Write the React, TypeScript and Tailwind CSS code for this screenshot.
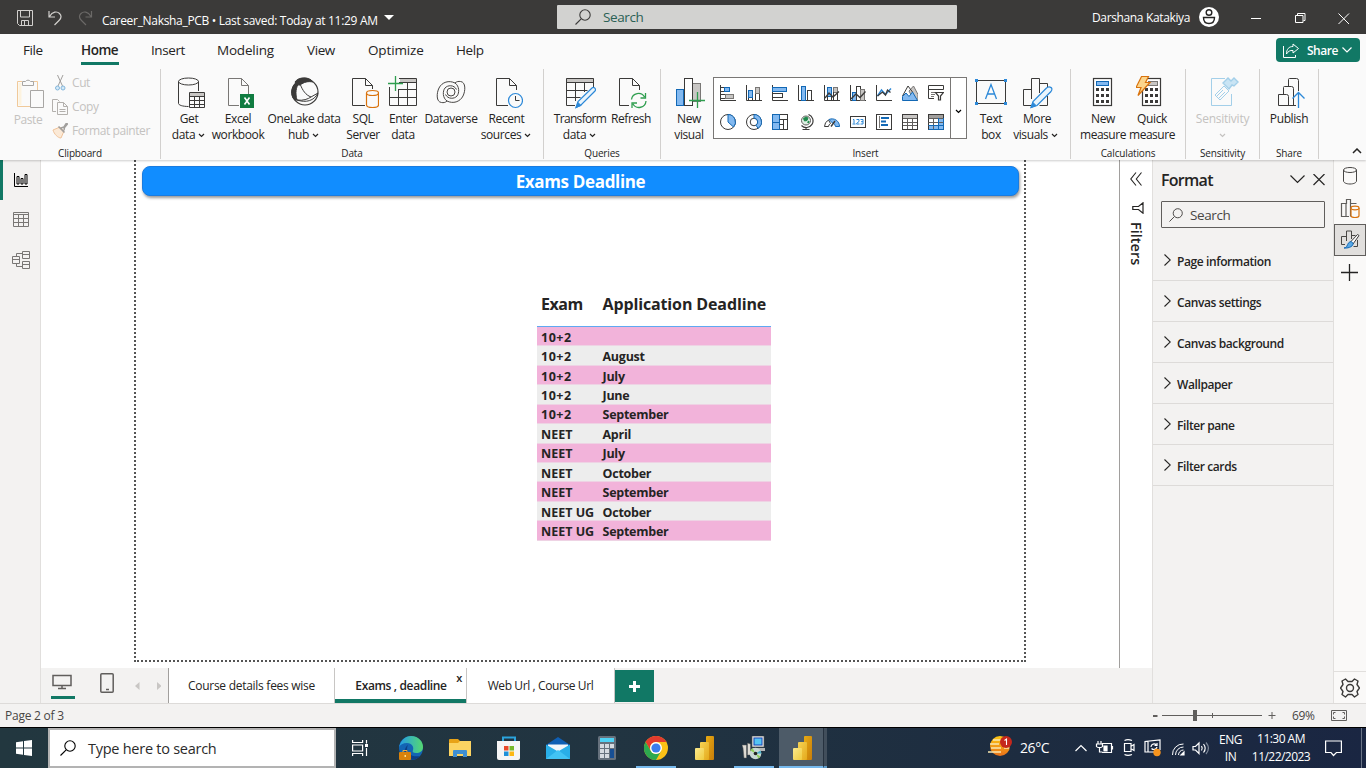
import React from 'react';

type Box = { b: string; className?: string; children: React.ReactNode };

/* Outline drawing; b is the view box "x y w h" and the class gives the size. */
function Ico({ b, className = '', children }: Box) {
  return (
    <svg viewBox={b} className={'block shrink-0 ' + className} fill="none" stroke="#3b3a39" strokeWidth="1">
      {children}
    </svg>
  );
}

const Caret = ({ className = '' }: { className?: string }) => (
  <svg viewBox="0 0 7 5" className={'inline-block h-[5px] w-[7px] ' + className} fill="none" stroke="currentColor" strokeWidth="1.2">
    <path d="M1 1l2.5 2.5L6 1" />
  </svg>
);

const Mag = ({ className = '' }: { className?: string }) => (
  <svg viewBox="0 0 16 16" className={'block shrink-0 ' + className} fill="none" stroke="currentColor" strokeWidth="1.1">
    <circle cx="10" cy="6" r="5.2" />
    <path d="M6.2 9.8L.5 15.5" />
  </svg>
);

type BtnProps = { w: string; l1: string; l2?: string; caret?: boolean; dim?: boolean; t?: string; t2?: string; children: React.ReactNode };
function Btn({ w, l1, l2, caret, dim, t = '', t2 = '', children }: BtnProps) {
  return (
    <div className={'flex flex-col items-center whitespace-nowrap pt-2 text-xs leading-4 ' + w + (dim ? ' text-[#c4c2c0]' : ' text-[#252423]')}>
      {children}
      <div className={'mt-[2px] ' + t}>{l1}</div>
      <div className={'flex h-4 items-center ' + t2}>
        {l2}
        {caret && <Caret className={l2 ? 'ml-[3px] mr-px mt-px' : ''} />}
      </div>
    </div>
  );
}

function Group({ w, label, left, children }: { w: string; label: string; left?: boolean; children: React.ReactNode }) {
  return (
    <div className={'flex h-[92px] flex-col ' + w}>
      <div className="flex h-[90px] flex-col border-r border-[#d2d0ce]">
        <div className={'flex h-[78px] ' + (left ? '' : 'justify-center')}>{children}</div>
        <div className="text-center text-[10px] leading-[12px] tracking-[-0.015em] text-[#252423]">{label}</div>
      </div>
    </div>
  );
}

const PBI = () => (
  <svg viewBox="0 0 20 24" className="h-6 w-5" stroke="none">
    <defs>
      <linearGradient id="pa" x1="0" y1="0" x2="1" y2="1"><stop stopColor="#e9ab12" /><stop offset="1" stopColor="#c77d0a" /></linearGradient>
      <linearGradient id="pb" x1="0" y1="0" x2="1" y2="1"><stop stopColor="#f6d355" /><stop offset="1" stopColor="#e4a91b" /></linearGradient>
      <linearGradient id="pc" x1="0" y1="0" x2="1" y2="1"><stop stopColor="#fbe98c" /><stop offset="1" stopColor="#f0cb3f" /></linearGradient>
    </defs>
    <rect x="11" y="0" width="8" height="24" rx="1" fill="url(#pa)" />
    <rect x="5" y="6" width="9" height="18" rx="1" fill="url(#pb)" />
    <rect x="0" y="12" width="9" height="12" rx="1" fill="url(#pc)" />
  </svg>
);

const gallery: React.ReactNode[] = [
  <><path d="M.5 0v15.500H16" /><rect x=".5" y="2.500" width="4" height="4" fill="#fff" /><rect x="4.500" y="2.500" width="5" height="4" fill="#83b9f0" stroke="#1268b5" /><rect x=".5" y="9.500" width="5" height="4" fill="#fff" /><rect x="5.500" y="9.500" width="8" height="4" fill="#c8c6c4" stroke="#797775" /></>,
  <><path d="M.5 0v15.500H16" /><path d="M2.500 12.500v3M6.500 12.500v3M2.500 12.500h4M9.500 8.500v7M13.500 8.500v7" /><rect x="2.500" y="5.500" width="4" height="7" fill="#83b9f0" stroke="#1268b5" /><rect x="9.500" y="2.500" width="4" height="6" fill="#c8c6c4" stroke="#797775" /></>,
  <><path d="M.5 0v15.500H16" /><rect x=".5" y="2.500" width="14" height="4" fill="#83b9f0" stroke="#1268b5" /><rect x=".5" y="8.500" width="10" height="4" fill="#fff" /></>,
  <><path d="M.5 0v15.500H16" /><rect x="3.500" y="1.500" width="4" height="14" fill="#83b9f0" stroke="#1268b5" /><rect x="9.500" y="5.500" width="4" height="10" fill="#fff" /></>,
  <><path d="M.5 0v15.500H16" /><rect x="3.500" y="2.500" width="4" height="9" fill="#83b9f0" stroke="#1268b5" /><rect x="9.500" y="2.500" width="4" height="5" fill="#c8c6c4" stroke="#797775" /><path d="M3.500 11v4M7.500 11v4M9.500 7v8M13.500 7v8" /><path d="M1 13l4-5 4 4 6-5.500" strokeWidth="1.300" /></>,
  <><path d="M.5 0v15.500H16" /><rect x="2.500" y="7.500" width="4" height="8" fill="#83b9f0" stroke="#1268b5" /><rect x="6.500" y="1.500" width="4" height="14" fill="#fff" /><rect x="10.500" y="4.500" width="4" height="11" fill="#c8c6c4" stroke="#797775" /><path d="M1 14l5-5 4 3.500 5.500-6" strokeWidth="1.300" /></>,
  <><path d="M.5 0v15.500H16" /><path d="M1.500 11l4-6 4 4.500L15 3.500" stroke="#2b88d8" strokeWidth="1.400" /><path d="M1.500 11l5-4 3 3 2-5 3 2.500" strokeWidth="1.300" /></>,
  <><path d="M7 6l4.500-5L16 9.500v6h-4z" fill="#c8c6c4" stroke="#797775" /><path d="M.5 11L6 1l4.500 6" /><path d="M.5 15.500v-4L4 8l3 3.500L10.500 7l5 8.500z" fill="#83b9f0" stroke="#1268b5" /></>,
  <><path d="M6 13.500H.5V.5h15v4M.5 4.500h15" /><path d="M3 7.500h4M3 9.500h4M3 11.500h3" stroke="#797775" /><path d="M7.500 7.500h8l-3 3.500v4h-2v-4z" fill="#fff" strokeWidth="1.200" /></>,
  <><circle cx="8" cy="8" r="7.500" /><path d="M8 8V.5A7.500 7.500 0 0 1 13.500 13z" fill="#83b9f0" stroke="#1268b5" /></>,
  <><circle cx="8" cy="8" r="7.500" /><circle cx="8" cy="8" r="3.800" /><path d="M8 .5A7.500 7.500 0 0 1 12 14.300L10 11.200A3.800 3.800 0 0 0 8 4.200z" fill="#83b9f0" stroke="#1268b5" /></>,
  <><rect x=".5" y=".5" width="15" height="15" fill="#fff" /><path d="M.5.500h7v15h-7zM.5 8.500h7" fill="#83b9f0" stroke="#1268b5" /><path d="M7.500 5.500h8M7.500 10.500h4M11.500 5.500v10" /></>,
  <><circle cx="8" cy="6.500" r="4.500" fill="#dff0e4" stroke="#605e5c" /><path d="M5.500 4.500l2.500-1.500 2 1-1 2.500-2.500.5zM9.500 8l1.500-1-.5 2z" fill="#1f8a4c" stroke="#1f8a4c" /><path d="M10.500.5A6.700 6.700 0 1 1 3.500 11.500M8 13.500v2M4.500 15.500h7" strokeWidth="1.200" /></>,
  <><path d="M.5 12.500a7.500 7.500 0 0 1 4-6.500l2 3.500a4 4 0 0 0-2 3z" fill="#fff" /><path d="M5 5.500a7.500 7.500 0 0 1 10.500 7h-4a4 4 0 0 0-3-3.500z" fill="#83b9f0" stroke="#1268b5" /><path d="M7 12.500L11 7" strokeWidth="1.400" /></>,
  <><rect x=".5" y="2.500" width="15" height="11" fill="#fff" /><path d="M3 5.500h1v4M2.500 10h3M6.500 5.500h2.500v2l-2.500 2v.5H9.500M10.500 5.500h2.500v4.500h-2.500M11 7.700h2" stroke="#2b88d8" /></>,
  <><rect x=".5" y=".5" width="15" height="15" fill="#fff" /><path d="M3.500 2v12" stroke="#797775" /><path d="M5 4h8M5 7.500h5M5 11h7" stroke="#1268b5" strokeWidth="2" /></>,
  <><rect x=".5" y=".5" width="15" height="15" fill="#fff" /><path d="M1 2.500h14" stroke="#c8c6c4" strokeWidth="3" /><path d="M.5 4.500h15M.5 8.500h15M.5 11.500h15M5.500 4v11M10.500 4v11" stroke="#605e5c" /><path d="M.5.500h15v15H.5z" /></>,
  <><rect x=".5" y=".5" width="15" height="15" fill="#fff" /><path d="M1 2.500h14" stroke="#a19f9d" strokeWidth="3" /><rect x="10.500" y="4" width="5" height="11.500" fill="#83b9f0" stroke="none" /><rect x="1" y="12" width="14" height="3.500" fill="#83b9f0" stroke="none" /><path d="M.5.500h15v15H.5z" /><path d="M.5 4.500h15M.5 8.500h15M.5 11.500h15M5.500 4v11M10.500 4v11" stroke="#605e5c" /><path d="M10.500 4v11M15.500 4v11.500M.5 15.500h15M.5 11.500h15" stroke="#1268b5" /></>,
];

const rows: [string, string][] = [
  ['10+2', ''], ['10+2', 'August'], ['10+2', 'July'], ['10+2', 'June'], ['10+2', 'September'],
  ['NEET', 'April'], ['NEET', 'July'], ['NEET', 'October'], ['NEET', 'September'], ['NEET UG', 'October'], ['NEET UG', 'September'],
];

const sections = ['Page information', 'Canvas settings', 'Canvas background', 'Wallpaper', 'Filter pane', 'Filter cards'];

function TitleBar() {
  return (
    <div className="flex h-[34px] items-center bg-[#3b3a39] text-xs text-white">
      <Ico b="17 9 16 16" className="ml-[17px] mt-[2px] h-4 w-4">
        <g stroke="#d2d0ce"><path d="M17.500 9.500h15v15h-13l-2-2zM20.500 10v6h9v-6M21.500 24v-4.500h7V24M24.500 20v4" /></g>
      </Ico>
      <Ico b="48 9 15 16" className="ml-[15px] mt-px h-4 w-[15px]">
        <path d="M49 10v6h6M49.500 15.500c3-5 7.500-5.500 10-3s1.500 5-.5 7L54.500 24" stroke="#d2d0ce" strokeWidth="1.200" />
      </Ico>
      <Ico b="78 9 15 16" className="ml-[15px] mt-px h-4 w-[15px]">
        <path d="M91.500 10v6h-6M91 15.500c-3-5-7.500-5.500-10-3s-1.500 5 .5 7L86 24" stroke="#6b6967" strokeWidth="1.200" />
      </Ico>
      <div className="ml-[9px] mt-[7px] w-[282px] whitespace-nowrap tracking-[-0.026em]">Career_Naksha_PCB • Last saved: Today at 11:29 AM</div>
      <svg viewBox="0 0 10 5" className="mt-px h-[5px] w-[10px]"><path d="M0 0h10L5 5z" fill="#fff" /></svg>
      <div className="ml-[163px] flex h-6 w-[400px] items-center rounded-[1px] bg-[#d2d2d0] text-sm text-[#2b6155]">
        <Mag className="ml-[18px] h-4 w-4 text-[#3b3a39]" />
        <span className="ml-3 mt-px text-[13.500px]">Search</span>
      </div>
      <div className="ml-[135px] mt-[2px] w-[107px] whitespace-nowrap tracking-[-0.03em]">Darshana Katakiya</div>
      <svg viewBox="0 0 20 20" className="h-5 w-5"><circle cx="10" cy="10" r="10" fill="#fff" /><g fill="none" stroke="#252423" strokeWidth="1.400"><circle cx="10" cy="5.500" r="2.800" /><path d="M4.500 10.500h11c0 4-2 6-5.500 6s-5.500-2-5.500-6z" /></g></svg>
      <svg viewBox="1251 9 100 16" className="ml-8 mt-px h-4 w-[100px]" fill="none" stroke="#fff">
        <path d="M1251 17.500h10M1295.500 14.500h7.500v7h-7.500zM1297.500 14v-1.500h7.500v7h-1.500M1338.500 12.500l10.500 10.500M1349 12.500l-10.500 10.500" />
      </svg>
    </div>
  );
}

function Menu() {
  return (
    <div className="flex h-[34px] items-center whitespace-nowrap pb-[2px] pl-[23px] text-[13.500px] text-[#252423]">
      <span className="w-[58px]">File</span>
      <div className="flex w-[70px] self-stretch">
        <div className="flex h-[31px] w-[38px] items-center border-b-[3px] border-[#117865] pt-[4px] font-semibold tracking-[-0.035em]">Home</div>
      </div>
      <span className="w-[66px]">Insert</span>
      <span className="w-[90px] tracking-[-0.015em]">Modeling</span>
      <span className="w-[61px]">View</span>
      <span className="w-[88px] tracking-[-0.01em]">Optimize</span>
      <span className="w-[820px]">Help</span>
      <div className="flex h-6 w-[84px] items-center rounded bg-[#117865] text-xs text-white">
        <svg viewBox="0 0 17 15" className="ml-[7px] h-[15px] w-[17px]" fill="none" stroke="#fff"><path d="M.5 3v11.500h12V12M10 1l5.500 4.500L10 10V7.500C7 7 5 8.500 3.500 11c0-5 2.500-7.500 6.500-7.500z" /></svg>
        <span className="ml-[7px] mt-px font-semibold tracking-[-0.04em]">Share</span>
        <svg viewBox="0 0 10 6" className="ml-1 h-[6px] w-[10px]" fill="none" stroke="#fff" strokeWidth="1.200"><path d="M.5.500L5 5 9.500.500" /></svg>
      </div>
    </div>
  );
}

function Ribbon() {
  return (
    <div className="flex h-[92px] pt-[1px]">
      <Group w="w-[161px]" label="Clipboard" left>
        <Btn w="w-[56px]" l1="Paste" dim t="-mt-[1px]">
          <Ico b="13 75 32 34" className="-mt-px ml-[2px] h-[34px] w-8">
            <path d="M22 80.500h-4.500v25H30M33 80.500h4.500V89" stroke="#f0c99a" /><rect x="18.500" y="82" width="3" height="22" fill="#fdf3df" stroke="none" />
            <path d="M22.500 84.500v-4h3a3 3 0 0 1 5 0h3v4zM30.500 89.500h13v17h-13z" fill="#fafafa" stroke="#a8a6a4" />
          </Ico>
        </Btn>
        <div className="-ml-1 flex w-[105px] flex-col pt-[2px] text-xs leading-4 text-[#c4c2c0]">
          <div className="flex h-6 items-center"><Ico b="52 75 16 16" className="h-4 w-4"><path d="M57.500 75l5 11M63 75l-5 11" stroke="#a19f9d" /><g stroke="#83b7dc" fill="#d5e9f7"><circle cx="57.500" cy="88" r="2" /><circle cx="63" cy="88" r="2" /></g></Ico><span className="ml-1">Cut</span></div>
          <div className="flex h-6 items-center"><Ico b="52 98 16 16" className="h-4 w-4"><path d="M56 110.500h-3.500v-12h5l2 2M57.500 101.500h6l4 4v8h-10zM63.500 101.500v4h4M59.500 108.500h6M59.500 110.500h6" stroke="#b3b0ad" /></Ico><span className="ml-1">Copy</span></div>
          <div className="flex h-6 items-center"><Ico b="52 122 16 16" className="h-4 w-4"><path d="M53 129l7-3 4 4-3 7c-3 0-7-4-8-8z" stroke="#f0c39a" fill="#fbe9d6" /><path d="M58.500 125.500l6 6M61 127l3-1 2.500-4 1 1-3 3.500-.5 3" stroke="#a19f9d" strokeWidth="1.500" /></Ico><span className="ml-1 whitespace-nowrap tracking-[-0.035em]">Format painter</span></div>
        </div>
      </Group>
      <Group w="w-[383px]" label="Data">
        <Btn w="w-[42px] -ml-[3px]" l1="Get" l2="data" caret>
          <Ico b="173 76 32 32" className="h-8 w-8">
            <ellipse cx="188.500" cy="80.500" rx="10" ry="3.500" /><path d="M178.500 80.500v22c0 1.500 4 3 10 3M198.500 80.500V90" />
            <path d="M189.500 91.500h15v15h-15z" fill="#fafafa" /><path d="M190 93.500h14" stroke="#c8c6c4" strokeWidth="3" /><path d="M189.500 95.500h15M189.500 99.500h15M189.500 103.500h15M194.500 95.500v11M199.500 95.500v11" />
          </Ico>
        </Btn>
        <Btn w="w-[56px]" l1="Excel" l2="workbook">
          <Ico b="222 76 32 32" className="h-8 w-8">
            <path d="M239 104.500h-10.500v-27h13l7 7V93M241.500 77.500v7h7" stroke="#797775" />
            <rect x="240" y="93" width="14" height="14" fill="#107c41" stroke="none" /><path d="M244.500 96.500l5 7M249.500 96.500l-5 7" stroke="#fff" strokeWidth="1.600" />
          </Ico>
        </Btn>
        <Btn w="w-[76px]" l1="OneLake data" l2="hub" caret t="tracking-[-0.03em]">
          <Ico b="288 76 32 32" className="h-8 w-8">
            <circle cx="305" cy="91" r="13" strokeWidth="1.200" /><path d="M293 97c-3-6-1-13 5-16l1 1c-3 4-4 10-2 17-1.500.5-3-.5-4-2zM295 81c3-5 14-6 18 0-5-1-9 0-13 3-2 .5-4-1-5-3z" fill="#3b3a39" />
            <path d="M300.500 84c2 5 5 10 10.500 12M311 96l7-4M318 92c-4 8-12 10-21 7M297 99c6 1 11-1 14-3" />
          </Ico>
        </Btn>
        <Btn w="w-[42px]" l1="SQL" l2="Server">
          <Ico b="347 76 32 32" className="h-8 w-8">
            <path d="M365 104.500h-12.500v-27h13l7 7V88M365.500 77.500v7h7" />
            <g stroke="#d9720c" strokeWidth="1.200" fill="#fafafa"><path d="M366.500 92v12c0 1.500 2.500 2.500 6 2.500s6-1 6-2.500V92" /><ellipse cx="372.500" cy="92" rx="6" ry="2.500" /></g>
          </Ico>
        </Btn>
        <Btn w="w-[38px]" l1="Enter" l2="data">
          <Ico b="387 74 32 34" className="-mt-[2px] h-[34px] w-8">
            <rect x="400" y="77" width="16" height="4" fill="#c8c6c4" stroke="none" />
            <path d="M399 77.500h17.500v27h-27V86M399 81.500h17M398 88.500h18.500M389.500 96.500h27M398.500 88v16M407.500 81v23" /><path d="M395.500 75v15M388 82.500h15" stroke="#2f9e4f" strokeWidth="1.300" />
          </Ico>
        </Btn>
        <Btn w="w-[58px]" l1="Dataverse" t="tracking-[-0.03em]">
          <Ico b="435 76 32 32" className="h-8 w-8">
            <g stroke="#484644"><circle cx="451" cy="91" r="4" />
              <path d="M447 100C445 101.800 443.500 101.800 441.500 101.500C436 101 436.500 92 439 87C442 81 449 79 455 82C457 80.300 458.500 80.300 460.500 80.500C466 81 465.500 90 463 95C460 101 453 103 447 100z" />
              <path d="M447 100C442.500 97 442.500 90 445 87C447.500 84 454 83.500 456.500 88.500M455 82C459.500 85 459.500 92 457 95C454.500 98 448 98.500 445.500 93.500" />
            </g>
          </Ico>
        </Btn>
        <Btn w="w-[53px]" l1="Recent" l2="sources" caret>
          <Ico b="491 76 32 32" className="h-8 w-8">
            <path d="M508 104.500h-11.500v-27h13l7 7V89M509.500 77.500v7h7" />
            <circle cx="515.500" cy="99.500" r="7" stroke="#2b88d8" strokeWidth="1.200" fill="#fafafa" /><path d="M515.500 95v4.500h4" />
          </Ico>
        </Btn>
      </Group>
      <Group w="w-[117px]" label="Queries">
        <Btn w="w-[58px]" l1="Transform" l2="data" caret t="tracking-[-0.055em]">
          <Ico b="565 76 32 32" className="h-8 w-8">
            <rect x="567" y="77" width="28" height="4" fill="#c8c6c4" stroke="none" />
            <path d="M576 104.500h-8.500v-27h27V86M567.500 81.500h27M567.500 89.500h21M567.500 96.500h14M576.500 82v18M585.500 82v9" />
            <path d="M577 106.500l2-6L593 87c2-1.500 4.500 1 3 3l-14 14z" fill="#e9f4fc" stroke="#2b88d8" strokeWidth="1.200" /><path d="M577 106.500l2-5 3 3z" fill="#2b88d8" stroke="#2b88d8" />
          </Ico>
        </Btn>
        <Btn w="w-[44px]" l1="Refresh">
          <Ico b="615 76 32 32" className="h-8 w-8">
            <path d="M629 104.500h-9.500v-27h13l7 7V89M632.500 77.500v7h7" />
            <path d="M631.500 98.500a7 7 0 0 1 13-2.500M645.500 92v5h-5M646 100a7 7 0 0 1-13 3M632 107v-5h5" stroke="#2f9e4f" strokeWidth="1.300" />
          </Ico>
        </Btn>
      </Group>
      <Group w="w-[410px]" label="Insert">
        <Btn w="w-[42px] -ml-[2px]" l1="New" l2="visual">
          <Ico b="673 76 32 32" className="h-8 w-8">
            <rect x="676.500" y="88.500" width="7" height="16" fill="#83b9f0" stroke="#1268b5" /><rect x="692.500" y="82.500" width="8" height="18" fill="#c8c6c4" stroke="#797775" /><rect x="684.500" y="77.500" width="8" height="27" fill="#fff" />
            <path d="M697.500 91v16M689 99.500h16" stroke="#2f9e4f" strokeWidth="1.300" />
          </Ico>
        </Btn>
        <div className="ml-[3px] mt-2 flex h-[62px] w-[254px] border border-[#797775] bg-white">
          <div className="grid w-[237px] shrink-0 grid-cols-[repeat(9,26px)] content-start gap-y-[13px] border-r border-[#797775] pl-[6px] pt-[7px]">
            {gallery.map((g, i) => (
              <svg key={i} viewBox="0 0 16 16" className="h-4 w-4" fill="none" stroke="#3b3a39">{g}</svg>
            ))}
          </div>
          <div className="flex flex-1 items-center justify-center pt-[6px]"><Caret /></div>
        </div>
        <Btn w="w-[48px]" l1="Text" l2="box">
          <Ico b="975 76 32 32" className="h-8 w-8">
            <path d="M976.500 79.500h29v23h-29z" /><path d="M985.500 98l5.500-14.500 5.500 14.500M987.500 93h7" stroke="#2b88d8" strokeWidth="1.300" />
            <path d="M975 78h3v3h-3zM1004 78h3v3h-3zM975 101h3v3h-3zM1004 101h3v3h-3z" fill="#2b88d8" stroke="none" />
          </Ico>
        </Btn>
        <Btn w="w-[46px] -ml-px mr-px" l1="More" l2="visuals" caret t2="-ml-[2px]">
          <Ico b="1021 76 32 32" className="h-8 w-8">
            <path d="M1031 104.500h-7.500v-16h8M1031.500 98V77.500h8V92M1039.500 82.500h8V88M1047.500 95v9.500h-8" />
            <path d="M1031 106.500l2-6L1046 87.500c3-3 8-1 5 3L1037 104.500z" fill="#e9f4fc" stroke="#2b88d8" strokeWidth="1.200" /><path d="M1031 106.500l2-5 3 3z" fill="#2b88d8" stroke="#2b88d8" />
          </Ico>
        </Btn>
      </Group>
      <Group w="w-[115px]" label="Calculations">
        <Btn w="w-[49px] -ml-px" l1="New" l2="measure" t2="tracking-[-0.04em]">
          <Ico b="1087 76 32 32" className="h-8 w-8">
            <rect x="1093.500" y="77.500" width="18" height="27" strokeWidth="1.200" fill="#fff" /><rect x="1096.500" y="80.500" width="12" height="4" fill="#83b9f0" stroke="#1268b5" />
            <path d="M1096 88.500h14M1096 94.500h14M1096 100.500h14" strokeWidth="3" strokeDasharray="3 2" />
          </Ico>
        </Btn>
        <Btn w="w-[49px]" l1="Quick" l2="measure" t2="tracking-[-0.04em]">
          <Ico b="1136 74 32 34" className="-mt-[2px] h-[34px] w-8">
            <rect x="1142.500" y="77.500" width="18" height="27" strokeWidth="1.200" fill="#fff" /><rect x="1148.500" y="80.500" width="9" height="4" fill="#c8c6c4" stroke="#797775" />
            <path d="M1145 88.500h14M1145 94.500h14M1145 100.500h14" strokeWidth="3" strokeDasharray="3 2" />
            <path d="M1141.500 75.500h7l-3 6h4.500l-12 13 3-8h-5z" fill="#fbd58c" stroke="#d9720c" strokeWidth="1.200" />
          </Ico>
        </Btn>
      </Group>
      <Group w="w-[74px]" label="Sensitivity">
        <Btn w="w-[60px]" l1="Sensitivity" caret dim t="tracking-[-0.02em]">
          <Ico b="1207 76 32 32" className="h-8 w-8">
            <g stroke="#a3cfe9"><path d="M1225 77.500h-13.500v27h20V93" /><path d="M1215 94l9-9 5 5-9 9z" fill="#fafafa" /><path d="M1217 95l6-6M1219 97l6-6" /><path d="M1223 82l5-5 3 3 3-3 4 4-4 4-2-1-3 4z" fill="#c9e4f4" strokeWidth="1.400" /></g>
          </Ico>
        </Btn>
      </Group>
      <Group w="w-[59px]" label="Share">
        <Btn w="w-[44px]" l1="Publish">
          <Ico b="1273 76 32 32" className="h-8 w-8">
            <path d="M1278.500 93.500h8a2 2 0 0 1 2 2v9h-10zM1283.500 93v-6.500a1 1 0 0 1 1-1h7a2 2 0 0 1 2 2v16.500M1288.500 85v-6.500a1 1 0 0 1 1-1h7a2 2 0 0 1 2 2V90M1288 104.500h8" />
            <path d="M1298.500 107V91.500M1292.500 97.500l6-6 6 6" stroke="#2b88d8" strokeWidth="1.300" />
          </Ico>
        </Btn>
      </Group>
      <svg viewBox="0 0 10 6" className="ml-[33px] mt-[79px] h-[6px] w-[10px]" fill="none" stroke="#252423" strokeWidth="1.500"><path d="M1 5l4-4 4 4" /></svg>
    </div>
  );
}

function Canvas() {
  return (
    <div className="flex h-[508px] bg-white">
      <div className="ml-[93px] flex h-[502px] w-[892px] flex-col border-2 border-t-0 border-dotted border-[#555] px-[6px] pt-[6px]">
        <div className="h-[30px] w-[877px] rounded-lg border border-[#1a7ce0] bg-[#118dff] text-center text-[17px] font-bold leading-[29px] tracking-[-0.02em] text-white shadow-[1px_2px_3px_rgba(0,0,0,0.4)]">Exams Deadline</div>
        <div className="ml-[395px] mt-[89px] w-[234px] text-[#252423]">
          <div className="flex h-[42px] border-b border-[#5fa9f2] pl-1 text-[16px] font-bold leading-[38px] tracking-[-0.03em]">
            <div className="w-[61.500px]">Exam</div>
            <div className="whitespace-nowrap tracking-[-0.008em]">Application Deadline</div>
          </div>
          {rows.map(([a, b], i) => (
            <div key={i} className={'flex h-[19.430px] items-center border-b border-[#eed3e4] pl-1 pt-[3px] text-[12.500px] font-bold leading-4 ' + (i % 2 ? 'bg-[#ededed]' : 'bg-[#f2b3da]')}>
              <div className={'w-[61.500px] whitespace-nowrap ' + (i < 5 ? 'tracking-[0.04em]' : 'tracking-[0em]')}>{a}</div>
              <div className="tracking-[-0.02em]">{b}</div>
            </div>
          ))}
        </div>
      </div>
      <div className="ml-[93px] flex w-[33px] flex-col items-center border-l border-[#a19f9d] text-[#252423]">
        <svg viewBox="0 0 12 14" className="mt-3 h-[14px] w-3" fill="none" stroke="currentColor" strokeWidth="1.100"><path d="M6 .5L.8 7 6 13.500M11.500 .5L6.300 7l5.200 6.500" /></svg>
        <svg viewBox="0 0 12 12" className="ml-[3px] mt-[16px] h-3 w-3" fill="none" stroke="currentColor" strokeWidth="1.200"><path d="M11 .8v10.400L6.500 7.500H.8v-3h5.700z" /></svg>
        <div className="mt-[8px] text-[14.500px] font-semibold leading-5 tracking-[0em] [writing-mode:vertical-rl]">Filters</div>
      </div>
    </div>
  );
}

function TabBar() {
  return (
    <div className="flex h-[35px] bg-[#f3f2f1] text-xs text-[#252423]">
      <div className="ml-[10px] flex h-[31px] w-6 flex-col items-center border-b-[3px] border-[#117865] pt-[6px]">
        <Ico b="0 0 20 16" className="mr-[2px] h-4 w-5"><path d="M1 1.500h18v10H1zM10 12v2.500M6 14.500h8" stroke="#605e5c" strokeWidth="1.500" /></Ico>
      </div>
      <Ico b="0 0 14 20" className="ml-[25px] mt-[5px] h-5 w-[14px]"><rect x=".8" y=".8" width="12.400" height="18.400" rx="1" stroke="#605e5c" strokeWidth="1.500" /><path d="M6 16.500h3" stroke="#605e5c" strokeWidth="1.500" /></Ico>
      <svg viewBox="0 0 26 8" className="ml-[21px] mt-[14px] h-2 w-[26px]" fill="#c8c6c4"><path d="M4.500 0v8L0 4zM22 0v8l4.500-4z" /></svg>
      <div className="ml-[7px] flex w-[166px] items-center justify-center border-l border-[#a19f9d] bg-white pt-px tracking-[-0.023em]">Course details fees wise</div>
      <div className="flex h-[35px] w-[133px] border-x border-[#c8c6c4] bg-white">
        <div className="relative flex flex-1 items-center justify-center border-b-4 border-[#117865] pl-px pt-[5px] font-semibold tracking-[-0.03em]">
          Exams , deadline
          <span className="absolute right-[4px] top-[2px] text-[11px] leading-4 ">x</span>
        </div>
      </div>
      <div className="flex w-[148px] items-center justify-center border-r border-[#c8c6c4] bg-white pt-px">Web Url , Course Url</div>
      <div className="mt-[2px] flex h-8 w-[39px] items-center justify-center bg-[#117865]">
        <svg viewBox="0 0 11 11" className="h-[11px] w-[11px]"><path d="M4 0h3v4h4v3H7v4H4V7H0V4h4z" fill="#fff" /></svg>
      </div>
    </div>
  );
}

function FormatPane() {
  return (
    <div className="w-[181px] border-l border-[#e1dfdd] bg-[#f3f2f1] text-[#252423]">
      <div className="flex h-[40px] items-center pl-2">
        <div className="w-[129px] text-base font-semibold leading-5 tracking-[-0.045em]">Format</div>
        <svg viewBox="0 0 36 12" className="h-3 w-9" fill="none" stroke="#252423" strokeWidth="1.200"><path d="M.5 1.500L7.500 8.500 14.500 1.500M23.500 0l11 11M34.500 0l-11 11" /></svg>
      </div>
      <div className="ml-2 mt-[1px] flex h-[27px] w-[164px] items-center rounded-[1px] border border-[#605e5c] text-[13.500px] text-[#484644]">
        <Mag className="ml-[7px] h-[14px] w-[14px]" /><span className="ml-[7px] mt-[2px]">Search</span>
      </div>
      <div className="mt-[12px]">
        {sections.map((s) => (
          <div key={s} className="flex h-[41px] items-center border-b border-[#dddbd9] pl-[11px] text-xs font-semibold">
            <svg viewBox="0 0 7 12" className="mr-[6px] h-3 w-[7px]" fill="none" stroke="#252423" strokeWidth="1.100"><path d="M.5.500L6.300 6 .5 11.500" /></svg>
            <span className="mt-[3px]">{s}</span>
          </div>
        ))}
      </div>
    </div>
  );
}

function RightRail() {
  return (
    <div className="flex w-[33px] flex-col border-l border-[#e1dfdd] bg-[#faf9f8]">
      <div className="flex h-8 items-center justify-center"><Ico b="1342 167 16 18" className="h-[18px] w-4"><path d="M1343.500 170v11c0 1.500 2.500 3 6.500 3s6.500-1.500 6.500-3v-11" stroke="#484644" /><ellipse cx="1350" cy="170" rx="6.500" ry="2.500" stroke="#484644" /></Ico></div>
      <div className="flex h-8 items-center justify-center"><Ico b="1341 198 20 20" className="h-5 w-5"><path d="M1347 216.500h-4.500v-13h4.500v13h3M1347.500 204v-4.500h4v17M1351.500 203.500h6" stroke="#605e5c" strokeWidth="1.200" /><g stroke="#d9720c" strokeWidth="1.200" fill="#faf9f8"><path d="M1352 208v7.500c0 1 1.500 2 4 2s4-1 4-2V208" /><ellipse cx="1356" cy="208" rx="4" ry="1.800" /></g></Ico></div>
      <div className="flex h-8 items-center justify-center border border-[#605e5c] bg-[#e1dfdd]"><Ico b="1341 230 20 20" className="h-5 w-5"><path d="M1346 244.500h-3.500v-8h5M1347.500 241v-10h5v8M1352.500 235.500h4M1358.500 240v6.500h-4" stroke="#484644" /><path d="M1351.500 242l7-7.500 1.500 1-6 8.500z" fill="#fff" /><path d="M1345 248c3 0 3-3 4.500-5s4-1.500 4.500.5-3 5-9 4.500z" fill="#5aa9e6" stroke="#1268b5" /></Ico></div>
      <div className="flex h-8 items-center justify-center pr-px"><svg viewBox="0 0 17 17" className="h-[17px] w-[17px]" stroke="#252423" strokeWidth="1.300"><path d="M8.500 0v17M0 8.500h17" /></svg></div>
      <div className="mt-auto flex h-8 items-center justify-center border-t border-[#e1dfdd]">
        <svg viewBox="-10 -10 20 20" className="h-5 w-5" fill="none" stroke="#3b3a39" strokeWidth="1.400" strokeLinejoin="round">
          <circle r="3.500" /><path d="M-2-6.500L-4.500-9-8-7-7-3.500-9.500 0-7 3.500-8 6.500-4.500 9-2 6.500H2L4.500 9 8 6.500 7 3.500 9.500 0 7-3.500 8-7 4.500-9 2-6.500z" />
        </svg>
      </div>
    </div>
  );
}

function Taskbar() {
  return (
    <div className="flex h-10 items-start bg-[linear-gradient(90deg,#22373f_0%,#213441_45%,#1d2c40_75%,#1a2642_100%)] text-white">
      <svg viewBox="0 0 16 16" className="ml-4 mt-3 h-4 w-4" fill="#fff"><path d="M0 2.300L7 1.300v6.200H0zM8 1.100L16 0v7.500H8zM0 8.500h7v6.200l-7-1zM8 8.500h8V16l-8-1.100z" /></svg>
      <div className="ml-4 flex h-10 w-[288px] items-center border-2 border-[#b3b3b3] bg-white text-[#2b2b2b]">
        <Mag className="ml-[10px] h-4 w-4 text-black" />
        <span className="ml-3 mt-px text-[14.500px] tracking-[-0.018em]">Type here to search</span>
      </div>
      <svg viewBox="0 0 17 16" className="ml-4 mt-3 h-4 w-[17px]" fill="none" stroke="#fff" strokeWidth="1.200"><path d="M.6 0v2.500h10V0M.6 16v-2.500h10V16M.6 5h10v6H.6zM14.500 0v3.500M14.500 8v8" /><path d="M13 4h3v3h-3z" fill="#fff" stroke="none" /></svg>
      <svg viewBox="0 0 24 24" className="ml-[30px] mt-2 h-6 w-6">
        <defs><linearGradient id="e1"><stop stopColor="#239be8" /><stop offset="1" stopColor="#55d870" /></linearGradient></defs>
        <circle cx="12" cy="12" r="12" fill="#1365b4" /><path d="M0 11C2 4 6 0 12 0c8 0 12 6 12 11 0 4-3 6-7 6-3 0-4-1-3-3 1-3-1-7-6-7-4 0-7 2-8 4z" fill="url(#e1)" /><path d="M9 9c-3 5 1 13 12 11-5 6-13 4-15-1C5 15 6 11 9 9z" fill="#0d3f86" />
        <rect x="0" y="16" width="12" height="8" rx="1" fill="#d9820b" /><path d="M4 16v-1.500h4V16" stroke="#f3b03b" fill="none" /><path d="M5.500 19h1.500v2H5.500z" fill="#ffe08a" />
      </svg>
      <svg viewBox="0 0 22 20" className="ml-[26px] mt-[10px] h-5 w-[22px]"><path d="M0 2a1 1 0 0 1 1-1h8l2 2h10a1 1 0 0 1 1 1v13H0z" fill="#e8a317" /><path d="M0 5h9l2-2h11v15H0z" fill="#fcd462" /><path d="M4 19v-6a1 1 0 0 1 1-1h12a1 1 0 0 1 1 1v6h-4v-3H8v3z" fill="#3f8fd2" /></svg>
      <svg viewBox="0 0 24 24" className="ml-[26px] mt-2 h-6 w-6"><path d="M6 6V1.500h12V6" fill="none" stroke="#2ba3dc" strokeWidth="2" /><path d="M0 5h23v17a2 2 0 0 1-2 2H2a2 2 0 0 1-2-2z" fill="#f5f5f5" /><path d="M7 10h4.500v4.500H7z" fill="#e8492a" /><path d="M12.500 10H17v4.500h-4.500z" fill="#76b82a" /><path d="M7 15.500h4.500V20H7z" fill="#1e90d8" /><path d="M12.500 15.500H17V20h-4.500z" fill="#fdb813" /></svg>
      <svg viewBox="0 0 24 24" className="ml-[25px] mt-2 h-6 w-6"><path d="M0 9l12-8 12 8v14H0z" fill="#0f5fb4" /><path d="M2 8.500h20v9H2z" fill="#f3f6fa" /><path d="M0 8.500l12 7 12-7V23H0z" fill="#29aee8" /><path d="M0 23l12-9 12 9z" fill="#42c3f4" /></svg>
      <svg viewBox="0 0 18 24" className="ml-[28px] mt-2 h-6 w-[18px]"><rect width="18" height="24" rx="1.500" fill="#66717d" /><rect x="2" y="2" width="14" height="4" fill="#4fd2f5" /><g fill="#d5dae0"><path d="M2 8h4v4H2zM7 8h4v4H7zM12 8h4v4h-4zM2 13h4v4H2zM7 13h4v4H7zM2 18h4v4H2zM7 18h4v4H7z" /></g><path d="M12 13h4v9h-4z" fill="#174f94" /></svg>
      <div className="ml-5 flex h-10 w-10 flex-col items-center border-b-2 border-[#76b9ed] pt-2">
        <svg viewBox="-12 -12 24 24" className="h-6 w-6"><circle r="12" fill="#fbc116" /><path d="M-10.400-6A12 12 0 0 1 10.400-6H0A6 6 0 0 0-5.200 3z" fill="#e33b2e" /><path d="M-10.400-6A12 12 0 0 0 0 12L5.200 3A6 6 0 0 1-5.200 3z" fill="#2da94f" /><circle r="6" fill="#fff" /><circle r="4.600" fill="#3b7ded" /></svg>
      </div>
      <div className="ml-[19px] mt-2 h-6 w-5"><PBI /></div>
      <div className="ml-[19px] flex h-10 w-10 flex-col items-center border-b-2 border-[#76b9ed] pt-2">
        <svg viewBox="0 0 24 24" className="h-6 w-6"><path d="M10 0h12v11H10z" fill="#e4e4e0" stroke="#555" strokeWidth=".6" /><path d="M11.500 1.500h9v8h-9z" fill="#1747b8" /><path d="M12.500 2.500h7v6h-7z" fill="#55c4f2" /><path d="M9 12h14v3H17z" fill="#b5b5b5" /><path d="M0 9h4.500v13H2L1 12zM5.500 7l3 1v11H5.500z" fill="#dedbd4" stroke="#555" strokeWidth=".5" /><circle cx="13.500" cy="17.500" r="5.800" fill="#c9d8d4" /><path d="M13.500 17.500l-5-3 2-2.500zM13.500 17.500l5 3-2 2z" fill="#8fcf5a" /><path d="M13.500 17.500l5-3 1 3z" fill="#47b0c9" /><circle cx="13.500" cy="17.500" r="1.800" fill="#222" /></svg>
      </div>
      <div className="ml-[5px] flex h-10 w-11 justify-center border-b-2 border-[#76b9ed] bg-[#4d5b68] pl-[4px] pt-2"><PBI /></div>
      <div className="h-10 w-[4px] border-b-2 border-l border-b-[#5f9dcc] border-l-[#26323f] bg-[#414e5b]" />
      <svg viewBox="0 0 26 22" className="ml-[161px] mt-2 h-[22px] w-[26px]"><defs><linearGradient id="su" x1="0" y1="0" x2="0" y2="1"><stop stopColor="#fdc812" /><stop offset="1" stopColor="#e8701a" /></linearGradient></defs><circle cx="12" cy="10" r="10" fill="url(#su)" /><path d="M5 4h8M2 8h9M3 12h10M0 16h13M16 12h5" stroke="#f9e8b0" strokeWidth="1.600" /><circle cx="18" cy="6" r="6" fill="#c5281c" /><path d="M16.500 4.500l2-1.500v6" stroke="#fff" fill="none" strokeWidth="1.100" /></svg>
      <span className="ml-[6px] w-[54px] text-[14px] leading-10">26°C</span>
      <svg viewBox="1074 736 138 24" className="mt-2 h-6 w-[138px]" fill="none" stroke="#fff" strokeWidth="1.200">
        <path d="M1075.500 751l5.500-5.500 5.500 5.500" />
        <path d="M1102 743.500h9.500v9h-9.500M1112.500 746v3.500" /><path d="M1104 746h3v5h-3z" fill="#fff" /><path d="M1098 741v3M1101 741v3M1096.500 744h6v2.500c-1 1.500-5 1.500-6 0zM1099.500 748v4h3" />
        <path d="M1124.500 743.500h6.500v8h-6.500zM1131.500 746l2.500-1.500v6l-2.500-1.500M1124.500 740.500c2-1 5-1 7.500 0M1124.500 754.500c2 1 5 1 7.500 0" />
        <path d="M1154 752h-9v-10.500l15-1.500v10M1148 741v11" /><path d="M1151 747c0-3 4-4 5-2M1157 743v2.500h-2.500M1157 747c-1 3-4 3-5.500 1.500" /><circle cx="1157" cy="752.500" r="3.700" fill="#f7941d" stroke="none" />
        <path d="M1172.500 755a10.500 10.500 0 0 1 11-11M1175.500 755a8 8 0 0 1 8-8M1178.500 755a5 5 0 0 1 5-5" strokeWidth="1" /><path d="M1181 755l3-3v3z" fill="#fff" />
        <path d="M1193 746.500h2.500l3.500-3.500v10.500l-3.500-3.500h-2.500zM1201.500 746c1 1.500 1 3 0 4.500M1203.500 744c2 2.500 2 6 0 8.500" /><path d="M1206 742.500c3 3.500 3 8 0 11.500" stroke="#7c8798" />
      </svg>
      <div className="mt-[3px] w-[37px] text-center text-xs leading-[17px] tracking-[-0.04em]"><div>ENG</div><div>IN</div></div>
      <div className="ml-px mt-[2px] w-[62px] whitespace-nowrap text-center text-xs leading-[18px] tracking-[-0.045em]"><div>11:30 AM</div><div>11/22/2023</div></div>
      <svg viewBox="0 0 17 17" className="ml-[13px] mt-[12px] h-[17px] w-[17px]" fill="none" stroke="#fff" strokeWidth="1.200"><path d="M.6 1h15.800v11.500h-5L8.500 15.500l-2.500-3H.6z" /></svg>
      <div className="ml-[19px] h-10 w-px bg-[#6a7486]" />
    </div>
  );
}

export default function App() {
  return (
    <div className="h-[768px] w-[1366px] overflow-hidden bg-[#fafafa] font-['Open_Sans','Noto_Sans',sans-serif] tracking-[-0.025em]">
      <TitleBar />
      <div className="relative z-10 h-[126px] bg-[#fafafa] shadow-[0_1px_2px_rgba(0,0,0,0.2)]">
        <Menu />
        <Ribbon />
      </div>
      <div className="flex h-[543px]">
        <div className="w-[41px] border-r border-[#e1dfdd] bg-[#f3f2f1]">
          <div className="h-10 border-l-[3px] border-[#117865]">
            <Ico b="14 160 14 40" className="ml-[11px] h-10 w-[14px]"><path d="M14.500 173v13.500H28M17 176.500h2v7.500h-2zM21 178.500h2v5.500h-2zM25 174.500h2v9.500h-2z" stroke="#000" /></Ico>
          </div>
          <Ico b="13 212 16 16" className="ml-[13px] mt-3 h-4 w-4"><path d="M13.500 212.500h15v14h-15zM13.500 214.500h15M13.500 218.500h15M13.500 222.500h15M18.500 214v12M23.500 214v12" stroke="#797775" /></Ico>
          <Ico b="12 251 18 18" className="ml-3 mt-[23px] h-[18px] w-[18px]"><path d="M12.500 256.500h7v7h-7zM12.500 259.500h7M22.500 251.500h7v7h-7zM22.500 254.500h7M22.500 261.500h7v7h-7zM22.500 264.500h7M16.500 256v-2.500h6M16.500 264v2.500h6" stroke="#797775" /></Ico>
        </div>
        <div className="w-[1111px]">
          <Canvas />
          <TabBar />
        </div>
        <FormatPane />
        <RightRail />
      </div>
      <div className="flex h-6 items-center border-t border-[#dddbd9] bg-[#f3f2f1] text-xs text-[#484644]">
        <span className="ml-[5px] w-[1148px] tracking-[-0.02em]">Page 2 of 3</span>
        <svg viewBox="1153 704 124 23" className="h-[23px] w-[124px]" stroke="#605e5c" fill="none"><path d="M1153 716h4.500" strokeWidth="2" /><path d="M1162 715.500h100M1212.500 713v5M1268.500 715.500h7M1272 712v7" /><path d="M1195 710v11" strokeWidth="4" /></svg>
        <span className="ml-[15px] w-[39px]">69%</span>
        <svg viewBox="0 0 16 11" className="h-[11px] w-4" stroke="#605e5c" fill="none"><path d="M.5.500h15v10H.5z" /><path d="M2.500 4.500v-2h2M11.500 2.500h2v2M13.500 6.500v2h-2M4.500 8.500h-2v-2" /></svg>
      </div>
      <div className="h-px bg-black" />
      <Taskbar />
    </div>
  );
}
